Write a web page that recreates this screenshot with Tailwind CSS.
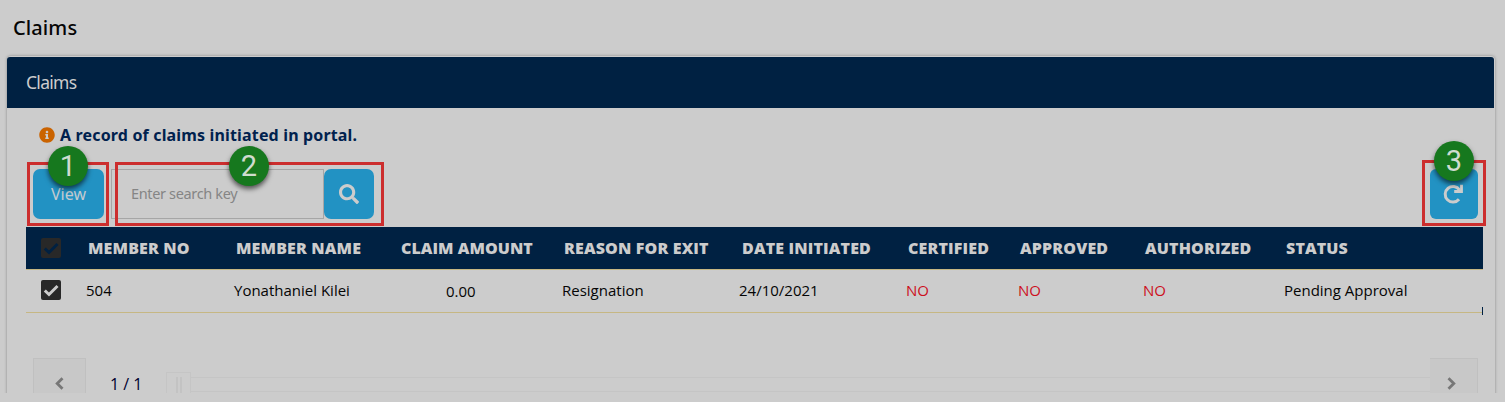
<!DOCTYPE html>
<html lang="en">
<head>
<meta charset="utf-8">
<title>Claims</title>
<script src="https://cdn.jsdelivr.net/npm/@tailwindcss/browser@4"></script>
</head>
<body class="relative h-[402px] w-[1505px] overflow-hidden bg-[#cccccc] font-['Open_Sans',sans-serif] text-[#050505]">
<div class="flex h-[393px] flex-col overflow-hidden">
  <h1 class="h-[56px] shrink-0 pl-[13px] pt-[14px] font-['Noto_Sans',sans-serif] text-[20px] font-medium leading-[28px] tracking-[0.1px]">Claims</h1>
  <main class="ml-[7px] h-[400px] w-[1488px] shrink-0 rounded-t-[4px] pt-px shadow-[0_0_3px_rgba(0,0,0,0.35)]">
    <header class="flex h-[51px] w-[1487px] items-center rounded-t-[3px] bg-[#002142] pl-[19px] font-['Noto_Sans',sans-serif] text-[17.5px] tracking-[-0.7px] text-[#cccccc]">Claims</header>
    <section class="pl-[19px]">
      <div class="flex h-[54px] items-center gap-[5px] pl-[13px] text-[16px] font-bold text-[#00214e]">
        <svg class="size-[16px]" viewBox="0 0 512 512" fill="#ca6300"><path d="M256 8C119 8 8 119 8 256s111 248 248 248 248-111 248-248S393 8 256 8zm0 110c23 0 42 19 42 42s-19 42-42 42-42-19-42-42 19-42 42-42zm56 254c0 7-5 12-12 12h-88c-7 0-12-5-12-12v-24c0-7 5-12 12-12h12v-64h-12c-7 0-12-5-12-12v-24c0-7 5-12 12-12h64c7 0 12 5 12 12v100h12c7 0 12 5 12 12z"/></svg>
        <span class="font-['Noto_Sans',sans-serif] font-bold tracking-[0.16px]">A record of claims initiated in portal.</span>
      </div>
      <div class="flex h-[65px] pl-[7px] pt-[7px]">
        <button class="h-[50px] w-[71px] rounded-[7px] bg-[#2292c3] font-['Noto_Sans',sans-serif] text-[16px] text-[#c4cbd0]">View</button>
        <div class="ml-[7px] flex h-[50px] w-[213px] items-center border border-[#a6a6a6] pl-[19px] font-['Noto_Sans',sans-serif] text-[14.5px] tracking-[-0.35px] text-[#858585]">Enter search key</div>
        <button class="flex size-[50px] items-center justify-center rounded-[7px] bg-[#2292c3]"><svg class="size-[20px]" viewBox="0 0 512 512" fill="#cccccc"><path d="M505 442.700L405.300 343c-4.500-4.500-10.600-7-17-7H372c27.600-35.300 44-79.700 44-128C416 93.100 322.900 0 208 0S0 93.100 0 208s93.100 208 208 208c48.300 0 92.700-16.400 128-44v16.300c0 6.400 2.500 12.500 7 17l99.700 99.700c9.400 9.400 24.600 9.400 33.900 0l28.300-28.300c9.400-9.400 9.400-24.600.1-34zM208 336c-70.700 0-128-57.200-128-128 0-70.700 57.200-128 128-128 70.700 0 128 57.200 128 128 0 70.700-57.200 128-128 128z"/></svg></button>
        <button class="ml-[1056px] flex h-[50px] w-[48px] items-center justify-center rounded-[6px] bg-[#2292c3]"><svg class="mr-[2px] size-[20px]" viewBox="0 0 20 20" fill="none" stroke="#cccccc" stroke-width="3"><path d="M16 15.300A7.800 7.800 0 1 1 16.500 6"/><path d="M18.500.700v6.800h-7.300" stroke-width="2.800"/></svg></button>
      </div>
      <div class="w-[1457px]">
        <div class="grid h-[42px] grid-cols-[62px_148px_165px_163px_178px_166px_112px_125px_141px_1fr] items-center bg-[#002142] text-[16px] font-extrabold text-[#cccccc] whitespace-nowrap">
          <span class="pl-[15px]"><svg class="size-[20px]" viewBox="0 0 20 20"><rect width="20" height="20" rx="2" fill="#282828"/><path d="M3.800 10.500 8 14.500 16.500 6" fill="none" stroke="#002142" stroke-width="3"/></svg></span>
          <span class="tracking-[0.15px]">MEMBER NO</span><span class="tracking-[0.15px]">MEMBER NAME</span><span class="tracking-[0.05px]">CLAIM AMOUNT</span><span class="tracking-[0.15px]">REASON FOR EXIT</span><span class="tracking-[0.15px]">DATE INITIATED</span><span class="tracking-[0.15px]">CERTIFIED</span><span class="tracking-[0.15px]">APPROVED</span><span class="tracking-[0.15px]">AUTHORIZED</span><span class="tracking-[0.15px]">STATUS</span>
        </div>
        <div class="relative grid h-[44px] grid-cols-[60px_148px_212px_116px_177px_167px_112px_125px_141px_1fr] items-center border-y border-[#c6b783] pb-[2px] text-[15px] whitespace-nowrap">
          <span class="pl-[15px]"><svg class="size-[20px]" viewBox="0 0 20 20"><rect width="20" height="20" rx="2" fill="#282828"/><path d="M3.800 10.500 8 14.500 16.500 6" fill="none" stroke="#cccccc" stroke-width="3"/></svg></span>
          <span>504</span><span>Yonathaniel Kilei</span><span class="pt-[2px]">0.00</span><span>Resignation</span><span>24/10/2021</span><span class="text-[#cc101c]">NO</span><span class="text-[#cc101c]">NO</span><span class="text-[#cc101c]">NO</span><span>Pending Approval</span>
          <i class="absolute -bottom-[3px] right-0 h-[8px] w-px bg-[#002142]"></i>
        </div>
      </div>
      <div class="flex h-[60px] pl-[7px] pt-[45px]">
        <button class="flex h-[51px] w-[53px] shrink-0 items-center justify-center border border-[#c0c0c0] bg-[#c8c8c8]"><svg class="h-[13px] w-[9px]" viewBox="0 0 9 13" fill="none" stroke="#777777" stroke-width="2.800"><path d="M7.500 1.200 2.200 6.500l5.300 5.300"/></svg></button>
        <div class="ml-[24px] mt-[17px] h-[18px] w-[56px] shrink-0 text-[16px] leading-[18px] text-[#000030]">1 / 1</div>
        <div class="mt-[14px] flex h-[26px] w-[25px] shrink-0 items-center justify-center gap-[2px] border border-[#c5c5c5]"><i class="h-[16px] w-[2px] bg-[#c3c3c3]"></i><i class="h-[16px] w-[2px] bg-[#c3c3c3]"></i></div>
        <div class="mt-[19px] h-[15px] w-[1239px] shrink-0 border-y border-[#c5c5c5]"></div>
        <button class="flex h-[51px] w-[48px] shrink-0 items-center justify-center border border-l-0 border-[#c0c0c0] bg-[#c8c8c8] pr-[4px]"><svg class="h-[13px] w-[9px]" viewBox="0 0 9 13" fill="none" stroke="#777777" stroke-width="2.800"><path d="m1.500 1.200 5.300 5.300-5.300 5.300"/></svg></button>
      </div>
    </section>
  </main>
</div>
<div class="absolute left-[27px] top-[162px] h-[64px] w-[82px] border-3 border-[#cc2e2e]"></div>
<div class="absolute left-[115px] top-[162px] h-[64px] w-[269px] border-3 border-[#cc2e2e]"></div>
<div class="absolute left-[1422px] top-[160px] h-[66px] w-[64px] border-3 border-[#cc2e2e]"></div>
<div class="absolute left-[48px] top-[146px] flex size-[40px] items-center justify-center rounded-full bg-[#16781e] font-['Roboto',sans-serif] text-[29px] leading-none text-[#cfdccf] shadow-[0_3px_5px_rgba(0,0,0,0.6)]">1</div>
<div class="absolute left-[229px] top-[146px] flex size-[40px] items-center justify-center rounded-full bg-[#16781e] font-['Roboto',sans-serif] text-[29px] leading-none text-[#cfdccf] shadow-[0_3px_5px_rgba(0,0,0,0.6)]">2</div>
<div class="absolute left-[1434px] top-[141px] flex size-[40px] items-center justify-center rounded-full bg-[#16781e] font-['Roboto',sans-serif] text-[29px] leading-none text-[#cfdccf] shadow-[0_3px_5px_rgba(0,0,0,0.6)]">3</div>
</body>
</html>
